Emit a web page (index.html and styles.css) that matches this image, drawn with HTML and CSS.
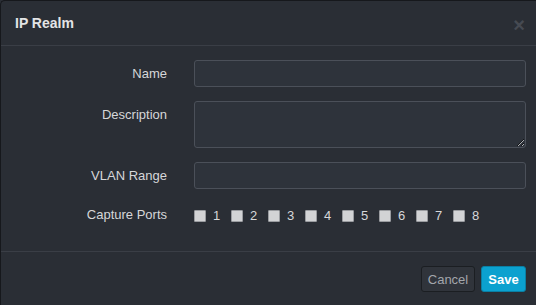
FILE: index.html
```html
<!DOCTYPE html>
<html>
<head>
<meta charset="utf-8">
<link rel="stylesheet" href="styles.css">
</head>
<body>
<div class="modal">
  <div class="modal-header">
    <h3 class="title">IP Realm</h3>
    <span class="close">&times;</span>
  </div>
  <div class="modal-body">
    <div class="row">
      <label class="label">Name</label>
      <input class="input" type="text">
    </div>
    <div class="row">
      <label class="label">Description</label>
      <textarea class="input textarea"></textarea>
    </div>
    <div class="row">
      <label class="label">VLAN Range</label>
      <input class="input" type="text">
    </div>
    <div class="row ports-row">
      <label class="label">Capture Ports</label>
      <div class="ports">
        <span class="port"><span class="box"></span>1</span>
        <span class="port"><span class="box"></span>2</span>
        <span class="port"><span class="box"></span>3</span>
        <span class="port"><span class="box"></span>4</span>
        <span class="port"><span class="box"></span>5</span>
        <span class="port"><span class="box"></span>6</span>
        <span class="port"><span class="box"></span>7</span>
        <span class="port"><span class="box"></span>8</span>
      </div>
    </div>
  </div>
  <div class="modal-footer">
    <button class="btn btn-cancel">Cancel</button>
    <button class="btn btn-save">Save</button>
  </div>
</div>
</body>
</html>
```
FILE: styles.css
```css
html, body {
  margin: 0;
  padding: 0;
  background: #2a2e35;
}
body {
  font-family: "Liberation Sans", Arial, sans-serif;
  font-size: 13px;
  color: #d6d7d9;
}
.modal {
  width: 535px;
  height: 304px;
  background: #2a2e35;
  border-top: 1px solid #16181c;
  border-left: 1px solid #16181c;
  border-top-left-radius: 5px;
  display: flex;
  flex-direction: column;
}
.modal-header {
  height: 44px;
  border-bottom: 1px solid #3a3e46;
  display: flex;
  align-items: center;
  justify-content: space-between;
  padding: 0 11px 0 14px;
}
.title {
  margin: 0;
  font-size: 14px;
  font-weight: bold;
  color: #e3e4e6;
}
.close {
  font-size: 20px;
  font-weight: bold;
  color: #464a52;
  line-height: 20px;
  margin-top: 3px;
}
.modal-body {
  padding: 14px 10px 0 0;
  flex: 1;
  border-bottom: 1px solid #3a3e46;
}
.row {
  display: flex;
  align-items: flex-start;
  margin-bottom: 14px;
}
.label {
  width: 166px;
  text-align: right;
  padding-top: 6px;
  line-height: 15px;
  color: #d6d7d9;
  flex: none;
}
.input {
  margin: 0 0 0 27px;
  box-sizing: border-box;
  width: 332px;
  height: 27px;
  background: #2e333b;
  border: 1px solid #4b5059;
  border-radius: 3px;
  color: #ddd;
  font: inherit;
  outline: none;
}
.textarea {
  height: 47px;
  resize: vertical;
  display: block;
}
.ports-row {
  padding-top: 2px;
}
.ports-row .label {
  padding-top: 2px;
}
.ports {
  display: flex;
  margin-left: 27px;
  padding-top: 3px;
}
.port {
  display: flex;
  align-items: center;
  width: 37px;
  line-height: 15px;
  color: #d6d7d9;
}
.box {
  width: 10px;
  height: 10px;
  background: #d2d3d5;
  border: 1px solid #9a9ca0;
  border-radius: 1px;
  margin-right: 7px;
}
.modal-footer {
  display: flex;
  justify-content: flex-end;
  gap: 6px;
  padding: 14px 10px 13px 0;
}
.btn {
  height: 26px;
  border-radius: 3px;
  font-family: "Liberation Sans", Arial, sans-serif;
  font-size: 13px;
  padding: 0;
}
.btn-cancel {
  width: 54px;
  background: #30343b;
  border: 1px solid #1b1e22;
  color: #a3a6ab;
}
.btn-save {
  width: 45px;
  background: #0ba1cf;
  border: 1px solid #0a7fa4;
  color: #fff;
  font-weight: bold;
}
```
